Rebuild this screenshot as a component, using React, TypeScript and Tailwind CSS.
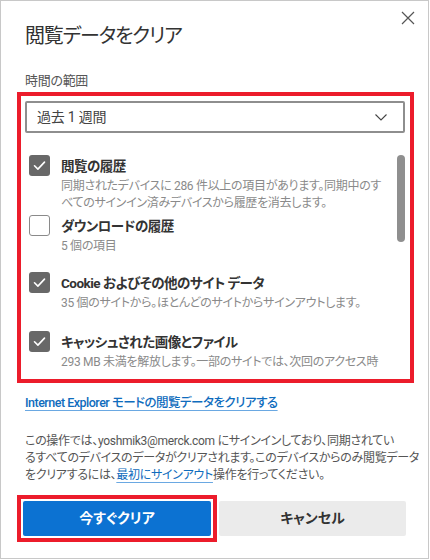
import { useState } from 'react';

type Item = {
  id: string;
  title: string;
  lines: string[];
  checked: boolean;
  gap: string;
};

const initialItems: Item[] = [
  {
    id: 'history',
    title: '閲覧の履歴',
    lines: [
      '同期されたデバイスに 286 件以上の項目があります。同期中のす',
      'べてのサインイン済みデバイスから履歴を消去します。',
    ],
    checked: true,
    gap: 'mt-0',
  },
  {
    id: 'downloads',
    title: 'ダウンロードの履歴',
    lines: ['5 個の項目'],
    checked: false,
    gap: 'mt-[3px]',
  },
  {
    id: 'cookies',
    title: 'Cookie およびその他のサイト データ',
    lines: ['35 個のサイトから。ほとんどのサイトからサインアウトします。'],
    checked: true,
    gap: 'mt-[17px]',
  },
  {
    id: 'cache',
    title: 'キャッシュされた画像とファイル',
    lines: ['293 MB 未満を解放します。一部のサイトでは、次回のアクセス時'],
    checked: true,
    gap: 'mt-[19px]',
  },
];

function CheckBox({ checked, onClick }: { checked: boolean; onClick: () => void }) {
  return (
    <button
      type="button"
      onClick={onClick}
      className={
        checked
          ? 'w-[21px] h-[21px] shrink-0 rounded-[3px] bg-[#686868] flex items-center justify-center'
          : 'w-[21px] h-[21px] shrink-0 rounded-[3px] bg-white border border-[#8a8a8a]'
      }
    >
      {checked && (
        <svg width="21" height="21" viewBox="0 0 21 21" fill="none">
          <path d="M5.5 10.8l3.4 3.3 6.6-7" stroke="white" strokeWidth="1.6" strokeLinecap="round" strokeLinejoin="round" />
        </svg>
      )}
    </button>
  );
}

export default function App() {
  const [items, setItems] = useState(initialItems);

  const toggle = (id: string) => {
    setItems(items.map(i => (i.id === id ? { ...i, checked: !i.checked } : i)));
  };

  return (
    <div className="w-[429px] h-[559px] bg-white border border-[#c8c8c8] relative font-['Roboto','Noto_Sans_CJK_JP',sans-serif] [font-feature-settings:'palt'] pl-[16px] pt-[21px]">
      {/* Close */}
      <button type="button" className="absolute top-[10px] right-[13px] w-[14px] h-[14px] flex items-center justify-center">
        <svg width="14" height="14" viewBox="0 0 14 14" fill="none">
          <path d="M1 1l12 12M13 1L1 13" stroke="#555" strokeWidth="1.2" />
        </svg>
      </button>

      {/* Header */}
      <h1 className="pl-[8px] text-[20px] leading-[28px] tracking-[-1.2px] text-[#333] font-normal">閲覧データをクリア</h1>
      <div className="pl-[8px] mt-[22px] text-[13px] leading-[18px] tracking-[-0.3px] text-[#555]">時間の範囲</div>

      {/* Range + data types */}
      <div className="mt-[2px] w-[397px] h-[291px] border-4 border-[#ec1c2b] flex flex-col overflow-hidden">
        <div className="mt-[5px] ml-[4px] w-[380px] h-[32px] shrink-0 border-2 border-[#8e8e8e] rounded-[2px] flex items-center justify-between pl-[10px] pr-[16px]">
          <span className="text-[14px] tracking-[-0.2px] text-[#444]">過去 1 週間</span>
          <svg width="12" height="7" viewBox="0 0 12 7" fill="none">
            <path d="M0.5 0.5l5.5 5.5 5.5-5.5" stroke="#444" strokeWidth="1.1" />
          </svg>
        </div>

        <div className="flex-1 flex min-h-0">
          <div className="flex-1 pl-[8px] pt-[22px] min-w-0 overflow-hidden">
            {items.map(item => (
              <div key={item.id} className={`flex gap-[11px] ${item.gap}`}>
                <CheckBox checked={item.checked} onClick={() => toggle(item.id)} />
                <div className="whitespace-nowrap">
                  <div className="text-[13.5px] leading-[22px] tracking-[-0.5px] font-bold text-[#333]">{item.title}</div>
                  <div className="mt-[1px] text-[12px] leading-[17px] tracking-[-0.3px] text-[#8a8a8a]">
                    {item.lines.map((l, i) => (
                      <div key={i}>{l}</div>
                    ))}
                  </div>
                </div>
              </div>
            ))}
          </div>
          <div className="w-[8px] mr-[5px] pt-[22px] shrink-0">
            <div className="h-[87px] rounded-full bg-[#8f8f8f]" />
          </div>
        </div>
      </div>

      {/* IE mode link */}
      <div className="pl-[8px] mt-[10px] text-[12.5px] leading-[20px] tracking-[-0.5px]">
        <a className="text-[#0f6cbd] font-medium underline decoration-[#6aa8e2] underline-offset-[3px]" href="#">
          Internet Explorer モードの閲覧データをクリアする
        </a>
      </div>

      {/* Notice */}
      <p className="pl-[8px] mt-[20px] text-[12px] leading-[17px] tracking-[-0.3px] text-[#555] whitespace-nowrap">
        この操作では、yoshmik3@merck.com にサインインしており、同期されてい
        <br />
        るすべてのデバイスのデータがクリアされます。このデバイスからのみ閲覧データ
        <br />
        をクリアするには、
        <a className="text-[#0f6cbd] underline decoration-[#6aa8e2] underline-offset-[3px]" href="#">
          最初にサインアウト
        </a>
        操作を行ってください。
      </p>

      {/* Actions */}
      <div className="mt-[11px] flex items-center gap-[2px]">
        <div className="w-[200px] h-[47px] border-4 border-[#ec1c2b] p-[2px]">
          <button type="button" className="w-full h-full rounded-[2px] bg-[#0c72d2] text-white text-[14px] font-bold">
            今すぐクリア
          </button>
        </div>
        <button type="button" className="w-[187px] h-[35px] rounded-[2px] bg-[#ebebeb] text-[#333] text-[14px] font-bold">
          キャンセル
        </button>
      </div>
    </div>
  );
}
